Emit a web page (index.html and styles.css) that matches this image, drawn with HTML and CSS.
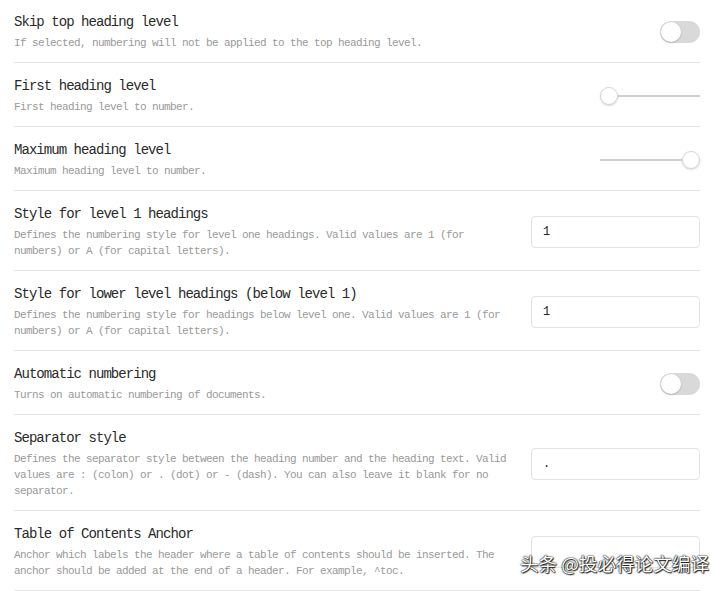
FILE: index.html
```html
<!DOCTYPE html>
<html lang="en">
  <head>
    <title>Heading Numbering Settings</title>
    <link rel="stylesheet" href="styles.css">
  </head>
  <body>
    <div class="settings">
      <div class="item">
        <div class="info">
          <div class="name">Skip top heading level</div>
          <div class="desc">If selected, numbering will not be applied to the top heading level.</div>
        </div>
        <div class="toggle"><span class="knob"></span></div>
      </div>
      <div class="item">
        <div class="info">
          <div class="name">First heading level</div>
          <div class="desc">First heading level to number.</div>
        </div>
        <input class="slider" type="range" min="1" max="6" value="1">
      </div>
      <div class="item">
        <div class="info">
          <div class="name">Maximum heading level</div>
          <div class="desc">Maximum heading level to number.</div>
        </div>
        <input class="slider" type="range" min="1" max="6" value="6">
      </div>
      <div class="item">
        <div class="info">
          <div class="name">Style for level 1 headings</div>
          <div class="desc">Defines the numbering style for level one headings. Valid values are 1 (for numbers) or A (for capital letters).</div>
        </div>
        <input class="field" type="text" value="1">
      </div>
      <div class="item">
        <div class="info">
          <div class="name">Style for lower level headings (below level 1)</div>
          <div class="desc">Defines the numbering style for headings below level one. Valid values are 1 (for numbers) or A (for capital letters).</div>
        </div>
        <input class="field" type="text" value="1">
      </div>
      <div class="item">
        <div class="info">
          <div class="name">Automatic numbering</div>
          <div class="desc">Turns on automatic numbering of documents.</div>
        </div>
        <div class="toggle"><span class="knob"></span></div>
      </div>
      <div class="item">
        <div class="info">
          <div class="name">Separator style</div>
          <div class="desc">Defines the separator style between the heading number and the heading text. Valid values are : (colon) or . (dot) or - (dash). You can also leave it blank for no separator.</div>
        </div>
        <input class="field" type="text" value=".">
      </div>
      <div class="item">
        <div class="info">
          <div class="name">Table of Contents Anchor</div>
          <div class="desc">Anchor which labels the header where a table of contents should be inserted. The anchor should be added at the end of a header. For example, ^toc.</div>
        </div>
        <input class="field" type="text" value="">
      </div>
    </div>
    <div class="watermark">头条 @投必得论文编译</div>
  </body>
</html>
```
FILE: styles.css
```css
* {
  box-sizing: border-box;
  margin: 0;
  padding: 0;
}
body {
  font-family: "Liberation Mono", monospace;
  background-color: #ffffff;
  color: #2a2a2a;
  overflow: hidden;
}
.settings {
  padding: 0 26px 0 14px;
  margin-top: -1px;
}
.item {
  display: flex;
  align-items: center;
  border-bottom: 1px solid #e6e6e6;
  padding: 13px 0 11px;
}
.info {
  flex: 1;
  padding-right: 19px;
}
.name {
  font-size: 14px;
  letter-spacing: -0.95px;
  line-height: 20px;
  margin-bottom: 3px;
}
.desc {
  font-size: 11px;
  letter-spacing: -0.6px;
  line-height: 16px;
  color: #999;
}

.toggle {
  width: 40px;
  height: 22px;
  border-radius: 11px;
  background-color: #d9d9d9;
  padding: 1px;
  display: flex;
}
.toggle .knob {
  width: 20px;
  height: 20px;
  border-radius: 50%;
  background-color: #fff;
  box-shadow: 0 1px 2px rgba(0, 0, 0, 0.2);
}

.slider {
  -webkit-appearance: none;
  appearance: none;
  width: 100px;
  height: 2px;
  background-color: #d0d0d0;
  outline: none;
}
.slider::-webkit-slider-thumb {
  -webkit-appearance: none;
  width: 18px;
  height: 18px;
  border-radius: 50%;
  background-color: #fff;
  border: 1px solid #d6d6d6;
  box-shadow: 0 1px 2px rgba(0, 0, 0, 0.15);
}

.field {
  width: 169px;
  height: 32px;
  border: 1px solid #e3e3e3;
  border-radius: 4px;
  padding: 0 11px;
  font-family: "Liberation Mono", monospace;
  font-size: 12px;
  color: #222;
  outline: none;
}

.watermark {
  position: absolute;
  right: 17px;
  bottom: 15px;
  font-family: "Noto Sans CJK SC", sans-serif;
  font-size: 18.6px;
  color: #fff;
  text-shadow: 0 0 2px #000, 0 0 1px #000, 1px 1px 1px #333;
}
```
